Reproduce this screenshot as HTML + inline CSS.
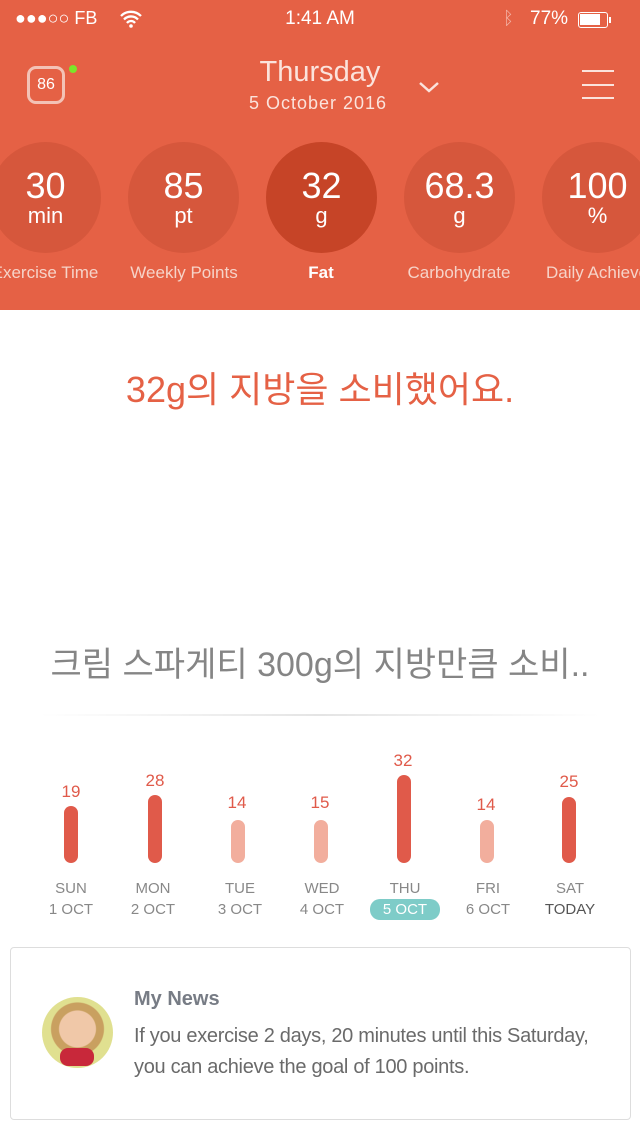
<!DOCTYPE html>
<html><head><meta charset="utf-8"><style>
*{margin:0;padding:0;box-sizing:border-box}
body{width:640px;height:1136px;position:relative;background:#fff;font-family:"Liberation Sans","Noto Sans CJK KR",sans-serif;overflow:hidden}
.hdr{position:absolute;left:0;top:0;width:640px;height:310px;background:#E56145;color:#fff;overflow:hidden}
.a{position:absolute}
.c{position:absolute;width:111px;height:111px;border-radius:50%;background:#D6573C;top:142px;text-align:center;color:#fff}
.c .n{position:absolute;top:24px;width:100%;font-size:36px;line-height:40px}
.c .u{position:absolute;top:62px;width:100%;font-size:22px;line-height:24px}
.lb{position:absolute;top:263px;font-size:17px;color:#f6d3c8;width:140px;text-align:center;white-space:nowrap}
.bar{position:absolute;width:14px;border-radius:7px;background:#E05A4A}
.lt{background:#F2AE9D}
.num{position:absolute;width:40px;text-align:center;font-size:17px;color:#E05A4A}
.d{position:absolute;width:80px;text-align:center;font-size:15px;color:#888;line-height:21px}
</style></head><body>
<div class="hdr">
 <div class="a" style="left:15px;top:8px;font-size:18px">●●●○○ FB</div>
 <svg class="a" style="left:119px;top:10px" width="24" height="18" viewBox="0 0 24 18"><path d="M2 6a14 14 0 0 1 20 0M5 9.5a9.5 9.5 0 0 1 14 0M8 13a5 5 0 0 1 8 0" stroke="#fff" stroke-width="2.3" fill="none"/><circle cx="12" cy="16" r="1.8" fill="#fff"/></svg>
 <div class="a" style="left:0;width:640px;text-align:center;top:8px;font-size:19px">1:41 AM</div>
 <div class="a" style="left:503px;top:8px;font-size:18px;color:#f3b2a5">ᛒ</div>
 <div class="a" style="left:530px;top:8px;font-size:19px">77%</div>
 <div class="a" style="left:578px;top:12px;width:30px;height:16px;border:1.5px solid #fff;border-radius:3px;padding:1px"><div style="width:20px;height:11px;background:#fff"></div></div>
 <div class="a" style="left:609px;top:17px;width:2px;height:6px;background:#fff"></div>
 <div class="a" style="left:27px;top:66px;width:38px;height:38px;border:3px solid #f3c2b6;border-radius:9px;text-align:center;font-size:16px;line-height:32px">86</div>
 <div class="a" style="left:69px;top:65px;width:8px;height:8px;border-radius:50%;background:#7CE52A"></div>
 <div class="a" style="left:0;width:640px;text-align:center;top:56px;font-size:29px;color:#fbe3dc">Thursday</div>
 <div class="a" style="left:0;width:636px;text-align:center;top:93px;font-size:18px;color:#fbe3dc;letter-spacing:1px">5 October 2016</div>
 <svg class="a" style="left:418px;top:80px" width="22" height="14"><path d="M2 3l9 8 9-8" stroke="#fbe3dc" stroke-width="2.5" fill="none"/></svg>
 <div class="a" style="left:582px;top:70px;width:32px;height:2px;background:#fbe3dc"></div>
 <div class="a" style="left:582px;top:84px;width:32px;height:2px;background:#fbe3dc"></div>
 <div class="a" style="left:582px;top:97px;width:32px;height:2px;background:#fbe3dc"></div>
 <div class="c" style="left:-10px"><div class="n">30</div><div class="u">min</div></div>
 <div class="c" style="left:128px"><div class="n">85</div><div class="u">pt</div></div>
 <div class="c" style="left:266px;background:#C64427"><div class="n">32</div><div class="u">g</div></div>
 <div class="c" style="left:404px"><div class="n">68.3</div><div class="u">g</div></div>
 <div class="c" style="left:542px"><div class="n">100</div><div class="u">%</div></div>
 <div class="lb" style="left:-25px">Exercise Time</div>
 <div class="lb" style="left:114px">Weekly Points</div>
 <div class="lb" style="left:251px;color:#fff;font-weight:bold">Fat</div>
 <div class="lb" style="left:389px">Carbohydrate</div>
 <div class="lb" style="text-align:left;left:546px">Daily Achievement</div>
</div>
<div class="a" style="left:0;width:640px;text-align:center;top:361px;font-size:36px;color:#E56145">32g의 지방을 소비했어요.</div>
<div class="a" style="left:0;width:640px;text-align:center;top:637px;font-size:34px;color:#858585">크림 스파게티 300g의 지방만큼 소비..</div>
<div class="a" style="left:40px;top:714px;width:560px;height:2px;background:linear-gradient(90deg,#fff,#e4e4e4,#fff)"></div>
<div class="bar" style="left:64px;top:806px;height:57px"></div>
<div class="bar" style="left:148px;top:795px;height:68px"></div>
<div class="bar lt" style="left:231px;top:820px;height:43px"></div>
<div class="bar lt" style="left:314px;top:820px;height:43px"></div>
<div class="bar" style="left:397px;top:775px;height:88px"></div>
<div class="bar lt" style="left:480px;top:820px;height:43px"></div>
<div class="bar" style="left:562px;top:797px;height:66px"></div>
<div class="num" style="left:51px;top:782px">19</div>
<div class="num" style="left:135px;top:771px">28</div>
<div class="num" style="left:217px;top:793px">14</div>
<div class="num" style="left:300px;top:793px">15</div>
<div class="num" style="left:383px;top:751px">32</div>
<div class="num" style="left:466px;top:795px">14</div>
<div class="num" style="left:549px;top:772px">25</div>
<div class="d" style="left:31px;top:878px">SUN<br>1 OCT</div>
<div class="d" style="left:113px;top:878px">MON<br>2 OCT</div>
<div class="d" style="left:200px;top:878px">TUE<br>3 OCT</div>
<div class="d" style="left:282px;top:878px">WED<br>4 OCT</div>
<div class="d" style="left:365px;top:878px">THU<br><span style="display:inline-block;width:70px;background:#7ECCC8;color:#fff;border-radius:10px">5 OCT</span></div>
<div class="d" style="left:448px;top:878px">FRI<br>6 OCT</div>
<div class="d" style="left:530px;top:878px">SAT<br><span style="color:#555">TODAY</span></div>
<div class="a" style="left:10px;top:947px;width:621px;height:173px;border:1px solid #ddd;border-radius:4px"></div>
<div class="a" style="left:42px;top:997px;width:71px;height:71px;border-radius:50%;background:radial-gradient(circle at 50% 45%,#f0c8a8 0 18px,#c9a060 19px 26px,#e0e090 27px)"></div>
<div class="a" style="left:60px;top:1048px;width:34px;height:18px;border-radius:8px;background:#c8283a"></div>
<div class="a" style="left:134px;top:988px;font-size:20px;font-weight:bold;color:#777c85">My News</div>
<div class="a" style="left:134px;top:1021px;font-size:20px;line-height:31px;color:#6a6a6a;letter-spacing:-0.3px;white-space:nowrap">If you exercise 2 days, 20 minutes until this Saturday,<br>you can achieve the goal of 100 points.</div>
</body></html>
